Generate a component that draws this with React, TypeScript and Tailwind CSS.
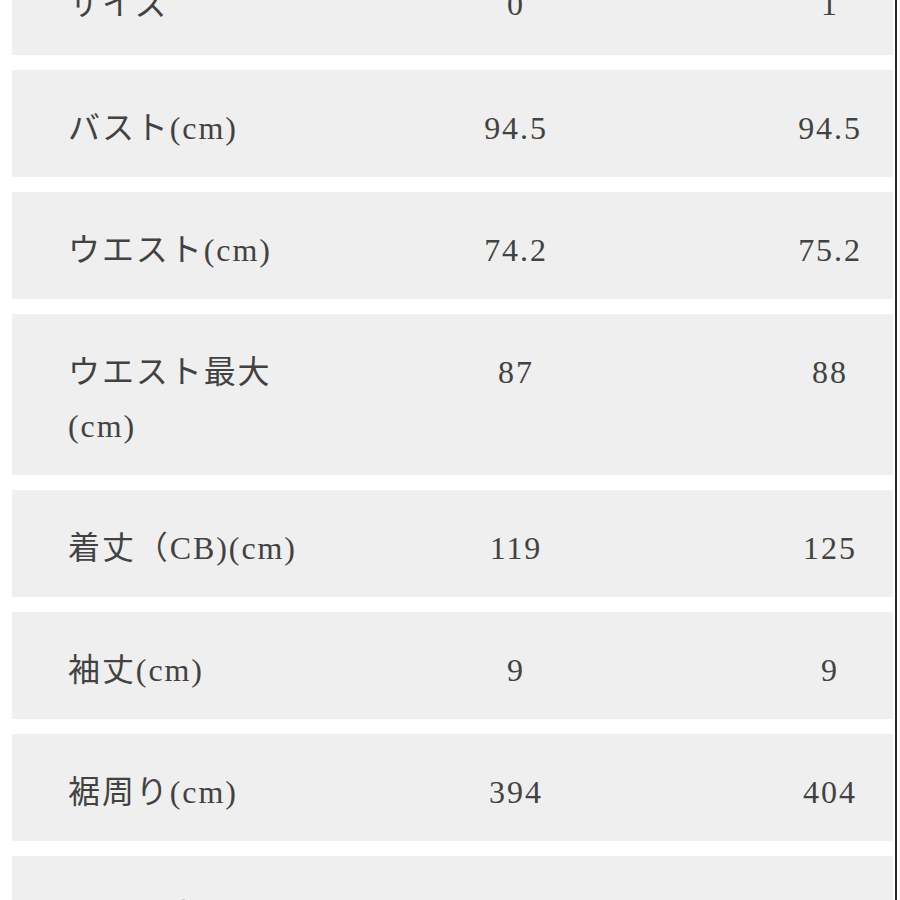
import React from "react";

type Row = { label: string[]; a: string; b: string; first?: boolean };

const rows: Row[] = [
  { label: ["サイズ"], a: "0", b: "1", first: true },
  { label: ["バスト(cm)"], a: "94.5", b: "94.5" },
  { label: ["ウエスト(cm)"], a: "74.2", b: "75.2" },
  { label: ["ウエスト最大", "(cm)"], a: "87", b: "88" },
  { label: ["着丈（CB)(cm)"], a: "119", b: "125" },
  { label: ["袖丈(cm)"], a: "9", b: "9" },
  { label: ["裾周り(cm)"], a: "394", b: "404" },
  { label: ["アームホール(cm)"], a: "40", b: "41" },
];

const font = { fontFamily: '"Liberation Serif", "Noto Sans CJK JP", serif' };

const App: React.FC = () => {
  return (
    <div className="w-[900px] h-[900px] overflow-hidden bg-white flex" style={font}>
      <div className="ml-[12px] w-[881px] -mt-[54px] flex flex-col gap-[15px]">
        {rows.map((row, i) => (
          <div
            key={i}
            className={`flex items-start bg-[#efefef] pl-[56px] text-[32px] leading-[54px] tracking-[0.06em] text-[#424242] ${
              row.first ? "pt-[31px] pb-[24px]" : "pt-[31px] pb-[22px]"
            }`}
          >
            <div className="w-[348px]">
              {row.label.map((l, j) => (
                <div key={j}>{l}</div>
              ))}
            </div>
            <div className="w-[200px] text-center">{row.a}</div>
            <div className="ml-auto w-[126px] text-center">{row.b}</div>
          </div>
        ))}
      </div>
      <div className="ml-[2px] w-[2px] bg-[#2a2a2a]" />
    </div>
  );
};

export default App;
